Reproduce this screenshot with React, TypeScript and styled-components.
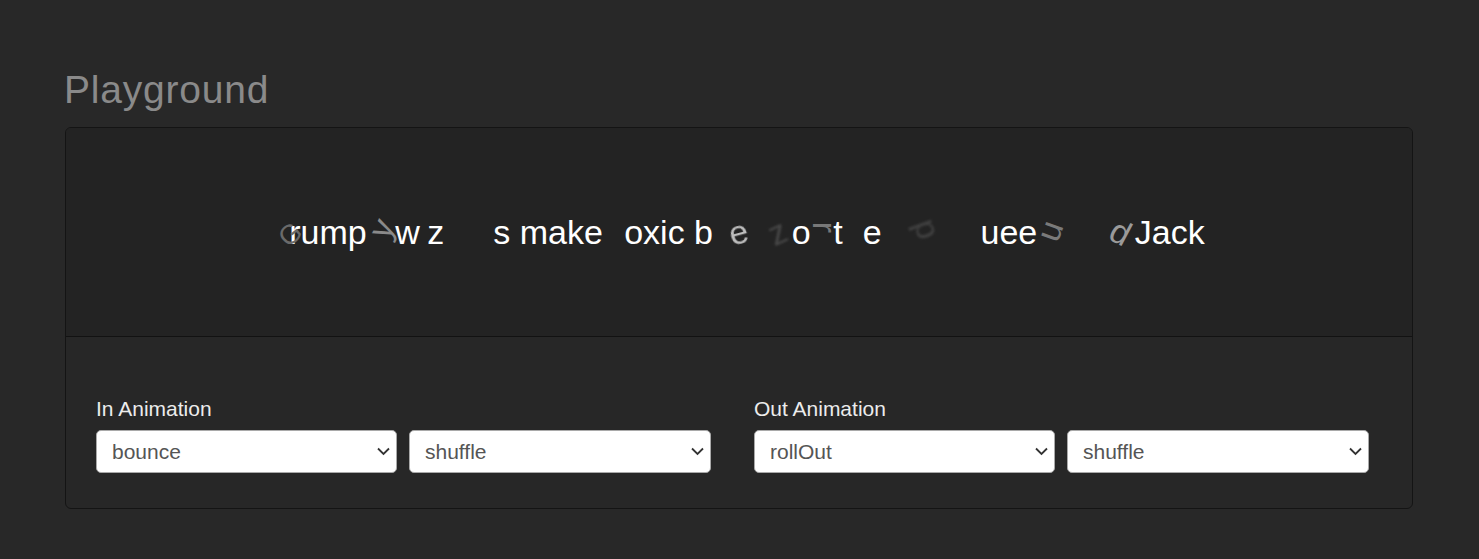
import React from "react";
import styled, { createGlobalStyle } from "styled-components";

const Global = createGlobalStyle`
  html, body { margin: 0; padding: 0; background: #282828; }
  body { min-height: 100vh; font-family: "Liberation Sans", Arial, sans-serif; }
  * { box-sizing: border-box; }
`;

const Page = styled.div`
  padding: 66px 66px 40px 65px;
  min-height: 100vh;
  background: #282828;
`;

const Title = styled.h1`
  margin: 0 0 14px -1px;
  font-family: "Liberation Sans", Arial, sans-serif;
  font-weight: 400;
  font-size: 39px;
  line-height: 47px;
  letter-spacing: 0.8px;
  color: #8a8a8a;
`;

const Card = styled.section`
  border: 1px solid #141414;
  border-radius: 6px;
  overflow: hidden;
  background: #272727;
`;

const Stage = styled.div`
  height: 209px;
  background: #232323;
  border-bottom: 1px solid #121212;
  display: flex;
  align-items: center;
  justify-content: center;
`;

const Line = styled.div`
  display: flex;
  align-items: center;
  font-family: "Liberation Sans", Arial, sans-serif;
  font-size: 34px;
  line-height: 39px;
  color: #ffffff;
  white-space: pre;
`;

const Letter = styled.span<{ $w?: number; $off?: boolean }>`
  display: inline-block;
  flex-shrink: 0;
  ${(p) => (p.$w !== undefined ? `width: ${p.$w}px;` : "")}
  ${(p) => (p.$off ? "opacity: 0;" : "")}
`;

const Ghost = styled.span<{ $w: number; $t: string; $col: string; $blur?: number }>`
  display: inline-block;
  flex-shrink: 0;
  width: ${(p) => p.$w}px;
  overflow: visible;
  & > span {
    display: inline-block;
    color: ${(p) => p.$col};
    transform: ${(p) => p.$t};
    ${(p) => (p.$blur ? `filter: blur(${p.$blur}px);` : "")}
  }
`;

const Space = styled.span`
  display: inline-block;
  flex-shrink: 0;
  width: 9.45px;
`;

const Controls = styled.div`
  padding: 60px 30px 35px 30px;
  display: flex;
  gap: 43px;
`;

const Group = styled.div`
  display: flex;
  flex-direction: column;
  width: 615px;
`;

const Label = styled.label`
  font-family: "Liberation Sans", Arial, sans-serif;
  font-size: 21px;
  line-height: 24px;
  color: #ececec;
  margin-bottom: 9px;
`;

const SelectRow = styled.div`
  display: flex;
  gap: 12px;
`;

const SelectWrap = styled.div<{ $w: number }>`
  position: relative;
  width: ${(p) => p.$w}px;
  height: 43px;
`;

const Select = styled.select`
  appearance: none;
  -webkit-appearance: none;
  width: 100%;
  height: 100%;
  background: #ffffff;
  border: 1px solid #a9a9a9;
  border-radius: 5px;
  padding: 0 30px 0 15px;
  font-family: "Liberation Sans", Arial, sans-serif;
  font-size: 21px;
  color: #555555;
  outline: none;
`;

const Chevron = styled.svg`
  position: absolute;
  right: 7px;
  top: 17px;
  width: 13px;
  height: 9px;
  pointer-events: none;
`;

type Tok =
  | { k: "on"; c: string }
  | { k: "off"; c: string; w: number }
  | { k: "ghost"; c: string; w: number; t: string; col: string; blur?: number }
  | { k: "sp" };

const on = (s: string): Tok[] => s.split("").map((c) => ({ k: "on", c }) as Tok);
const off = (c: string, w: number): Tok => ({ k: "off", c, w });
const ghost = (c: string, w: number, t: string, col: string, blur?: number): Tok => ({
  k: "ghost",
  c,
  w,
  t,
  col,
  blur,
});
const sp: Tok = { k: "sp" };

const tokens: Tok[] = [
  ghost("G", 16, "translate(4px, 2px) scale(0.8) rotate(-40deg)", "#6a6a6a"),
  ...on("rump"),
  ghost("y", 28.5, "translate(6px, -4px) rotate(-65deg)", "#8a8a8a"),
  ...on("w"),
  off("i", 7.5),
  ...on("z"),
  off("ard", 49),
  ...on("s"),
  sp,
  ...on("make"),
  sp,
  off("t", 11.8),
  ...on("oxic"),
  sp,
  ...on("b"),
  off("r", 16),
  ghost("e", 18.9, "rotate(-15deg)", "#bdbdbd", 0.4),
  ghost("z", 24.5, "translate(21px, 0px) rotate(-25deg)", "#474747", 1),
  sp,
  off("f", 10),
  ...on("o"),
  ghost("r", 13, "translate(8px, -5px) rotate(90deg)", "#787878"),
  sp,
  ...on("t"),
  off("h", 20),
  ...on("e"),
  sp,
  off("e", 19),
  ghost("d", 27, "translate(3px, -2px) rotate(-110deg)", "#414141", 0.8),
  off("i", 7.6),
  off("l", 7.6),
  sp,
  off("q", 18.9),
  ...on("uee"),
  ghost("n", 18.9, "translate(8px, 0px) rotate(110deg)", "#7a7a7a"),
  sp,
  off("a", 18.9),
  off("n", 18.9),
  ghost("d", 22, "translate(8px, 0px) rotate(28deg)", "#9a9a9a"),
  sp,
  ...on("Jack"),
];

const AnimatedText: React.FC = () => (
  <Line aria-label="Grumpy wizards make toxic brew for the evil queen and Jack">
    {tokens.map((t, i) => {
      if (t.k === "sp") return <Space key={i}> </Space>;
      if (t.k === "on") return <Letter key={i}>{t.c}</Letter>;
      if (t.k === "off")
        return (
          <Letter key={i} $w={t.w} $off>
            {t.c}
          </Letter>
        );
      return (
        <Ghost key={i} $w={t.w} $t={t.t} $col={t.col} $blur={t.blur}>
          <span>{t.c}</span>
        </Ghost>
      );
    })}
  </Line>
);

const Dropdown: React.FC<{ value: string; options: string[]; w: number }> = ({ value, options, w }) => (
  <SelectWrap $w={w}>
    <Select defaultValue={value}>
      {options.map((o) => (
        <option key={o} value={o}>
          {o}
        </option>
      ))}
    </Select>
    <Chevron viewBox="0 0 13 9">
      <polyline points="1,1.5 6.5,7 12,1.5" fill="none" stroke="#333" strokeWidth="1.8" />
    </Chevron>
  </SelectWrap>
);

const inAnims = ["bounce", "fadeIn", "flash", "rollIn", "zoomIn"];
const outAnims = ["rollOut", "fadeOut", "hinge", "zoomOut", "bounceOut"];
const modes = ["shuffle", "sequence", "reverse", "sync"];

export default function App() {
  return (
    <>
      <Global />
      <Page>
        <Title>Playground</Title>
        <Card>
          <Stage>
            <AnimatedText />
          </Stage>
          <Controls>
            <Group>
              <Label>In Animation</Label>
              <SelectRow>
                <Dropdown value="bounce" options={inAnims} w={301} />
                <Dropdown value="shuffle" options={modes} w={302} />
              </SelectRow>
            </Group>
            <Group>
              <Label>Out Animation</Label>
              <SelectRow>
                <Dropdown value="rollOut" options={outAnims} w={301} />
                <Dropdown value="shuffle" options={modes} w={302} />
              </SelectRow>
            </Group>
          </Controls>
        </Card>
      </Page>
    </>
  );
}
